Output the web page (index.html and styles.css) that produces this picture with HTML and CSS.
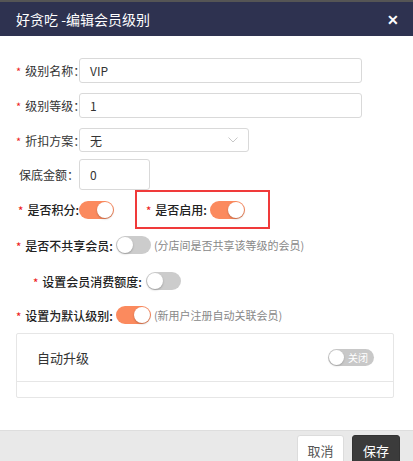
FILE: index.html
```html
<!DOCTYPE html>
<html lang="zh">
<head>
<meta charset="utf-8">
<link rel="stylesheet" href="styles.css">
</head>
<body>
<div class="dialog">
  <div class="header">
    <span class="title">好贪吃 -编辑会员级别</span>
    <span class="close">✕</span>
  </div>
  <div class="body">
    <div class="row r1">
      <label class="lbl"><i class="req">*</i>级别名称：</label>
      <div class="input wide">VIP</div>
    </div>
    <div class="row r2">
      <label class="lbl"><i class="req">*</i>级别等级：</label>
      <div class="input wide">1</div>
    </div>
    <div class="row r3">
      <label class="lbl"><i class="req">*</i>折扣方案：</label>
      <div class="input select">无
        <svg class="chev" width="10" height="6" viewBox="0 0 10 6"><path d="M0.5 0.5 L5 5 L9.5 0.5" fill="none" stroke="#c8c8c8" stroke-width="1"/></svg>
      </div>
    </div>
    <div class="row r4">
      <label class="lbl">保底金额：</label>
      <div class="input small">0</div>
    </div>
    <div class="row r5">
      <label class="lbl bold"><i class="req">*</i>是否积分:</label>
      <span class="switch on"><b></b></span>
      <div class="highlight">
        <label class="bold"><i class="req">*</i>是否启用:</label>
        <span class="switch on"><b></b></span>
      </div>
    </div>
    <div class="row r6">
      <label class="bold"><i class="req">*</i>是否不共享会员:</label>
      <span class="switch"><b></b></span>
      <span class="hint">(分店间是否共享该等级的会员)</span>
    </div>
    <div class="row r7">
      <label class="bold"><i class="req">*</i>设置会员消费额度:</label>
      <span class="switch"><b></b></span>
    </div>
    <div class="row r8">
      <label class="bold"><i class="req">*</i>设置为默认级别:</label>
      <span class="switch on"><b></b></span>
      <span class="hint">(新用户注册自动关联会员)</span>
    </div>
    <div class="panel">
      <div class="panel-head">
        <span class="panel-title">自动升级</span>
        <span class="switch2"><b></b><em>关闭</em></span>
      </div>
      <div class="panel-foot"></div>
    </div>
  </div>
  <div class="footer">
    <button class="btn cancel">取消</button>
    <button class="btn save">保存</button>
  </div>
</div>
</body>
</html>
```

FILE: styles.css
```css
* { box-sizing: border-box; }
html, body { margin: 0; padding: 0; background: #fff; }
body {
  font-family: "Noto Sans CJK SC", "Noto Sans", sans-serif;
  font-size: 12px;
  color: #333;
  width: 413px;
  height: 461px;
  overflow: hidden;
}
.dialog { width: 413px; height: 461px; display: flex; flex-direction: column; }
.header {
  height: 36px;
  border-top: 2px solid #555;
  background: #2e3250;
  color: #fff;
  display: flex;
  align-items: center;
  justify-content: space-between;
  padding: 0 14px 0 16px;
}
.title { font-size: 14px; }
.close { font-size: 14px; font-weight: bold; }
.body { flex: 1; padding: 22px 0 0 16px; position: relative; }
.row { display: flex; align-items: center; }
.lbl { width: 63px; text-align: right; white-space: nowrap; }
.req { font-style: normal; color: #e22; margin-right: 4px; font-size: 11px; }
.bold { font-weight: 500; color: #222; }
.input {
  border: 1px solid #d9d9d9;
  border-radius: 3px;
  height: 25px;
  padding: 0 10px;
  display: flex;
  align-items: center;
  color: #333;
}
.wide { width: 283px; }
.r1 { height: 25px; }
.r2 { height: 25px; margin-top: 10px; }
.r3 { height: 24px; margin-top: 10px; }
.r3 .input { height: 24px; }
.select { width: 170px; justify-content: space-between; }
.r4 { height: 31px; margin-top: 7px; }
.small { width: 71px; height: 31px; }
.r5 { height: 39px; margin-top: 0; }
.highlight {
  display: flex;
  align-items: center;
  margin-left: 21px;
  height: 39px;
  width: 135px;
  border: 2px solid #f03a3a;
  padding-left: 9px;
}
.highlight label { margin-right: 3px; }
.switch {
  width: 35px;
  height: 18px;
  border-radius: 9px;
  background: #ccc;
  position: relative;
  display: inline-block;
  flex: none;
}
.switch b {
  position: absolute;
  top: 1px;
  left: 1px;
  width: 16px;
  height: 16px;
  border-radius: 50%;
  background: #fff;
  box-shadow: 0 1px 2px rgba(0,0,0,0.25);
}
.switch.on { background: #fb8a5e; }
.switch.on b { left: 18px; }
.r6 { height: 20px; margin-top: 6px; }
.r6 label, .r8 label { margin-right: 3px; }
.hint { color: #888; margin-left: 3px; font-size: 11px; }
.r7 { height: 20px; margin-top: 16px; padding-left: 17px; }
.r7 label { margin-right: 4px; }
.r8 { height: 20px; margin-top: 14px; }
.panel {
  margin-top: 8px;
  width: 378px;
  height: 65px;
  border: 1px solid #e6e6e6;
  border-radius: 2px;
}
.panel-head {
  height: 48px;
  border-bottom: 1px solid #e6e6e6;
  display: flex;
  align-items: center;
  justify-content: space-between;
  padding: 0 19px 0 20px;
}
.panel-title { font-size: 13px; color: #333; }
.switch2 {
  width: 46px;
  height: 17px;
  border-radius: 9px;
  background: #c8c8c8;
  position: relative;
  display: inline-block;
}
.switch2 b {
  position: absolute;
  top: 1px; left: 1px;
  width: 15px; height: 15px;
  border-radius: 50%;
  background: #fff;
  box-shadow: 0 1px 2px rgba(0,0,0,0.2);
}
.switch2 em {
  font-style: normal;
  color: #fff;
  font-size: 10px;
  position: absolute;
  left: 20px;
  top: 0;
  line-height: 17px;
}
.footer {
  height: 31px;
  background: #e9e9e9;
  border-top: 1px solid #dedede;
  display: flex;
  justify-content: flex-end;
  align-items: flex-start;
  padding: 4px 13px 0 0;
  gap: 8px;
}
.btn {
  font-family: "Noto Sans CJK SC", sans-serif;
  font-size: 13px;
  height: 30px;
  border-radius: 3px;
  padding: 0;
  flex: none;
}
.cancel { width: 47px; background: #fff; border: 1px solid #dcdcdc; color: #555; }
.save { width: 48px; background: #3b3b3b; border: 1px solid #333; color: #fff; }
```
